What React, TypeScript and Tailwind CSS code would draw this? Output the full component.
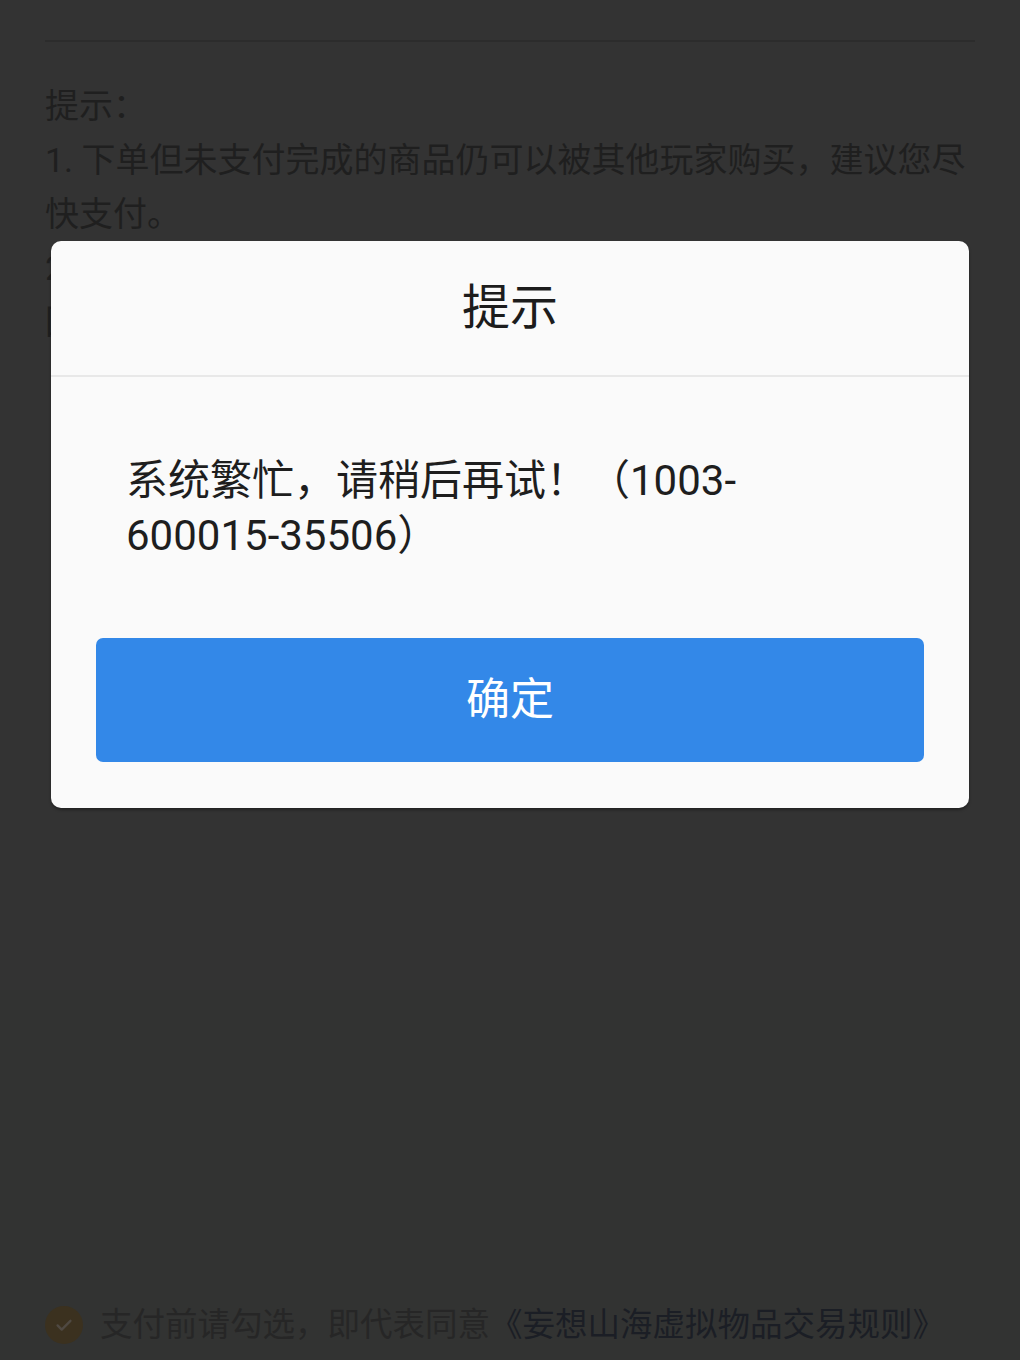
import React from "react";

const font = "font-['Roboto','Noto_Sans_CJK_SC',sans-serif]";

function PageBehind() {
  return (
    <div className="flex h-full flex-col">
      <div className="h-[40px]" />
      <div className="mx-[45px] h-[2px] bg-[#2c2c2c]" />
      <div className="flex flex-1 flex-col">
        <div className="pl-[45px] pr-[45px] pt-[37px] text-[34px] leading-[54px] text-[#1f1f1f]">
          <p>提示：</p>
          <p>1. 下单但未支付完成的商品仍可以被其他玩家购买，建议您尽快支付。</p>
          <p>2. 如商品在支付过程中被其他玩家购买，支付金额将原路退回，请留意账户余额变动。</p>
        </div>
      </div>
      <div className="h-[370px] bg-[#323332] px-[45px] pt-[308px]">
        <div className="flex items-center gap-[17px] text-[32.5px] leading-[54px]">
          <span className="flex h-[38px] w-[38px] shrink-0 items-center justify-center rounded-full bg-[#3b311f]">
            <svg viewBox="0 0 24 24" className="h-[22px] w-[22px]" fill="none" stroke="#4f4942" strokeWidth="2.6" strokeLinecap="round" strokeLinejoin="round">
              <path d="M5 12.5l4.5 4.5L19 7.5" />
            </svg>
          </span>
          <p className="whitespace-nowrap text-[#262626]">
            支付前请勾选，即代表同意<span className="text-[#1b1e25]">《妄想山海虚拟物品交易规则》</span>
          </p>
        </div>
        <p className="text-[32px] leading-[54px] text-[#262626]">并知晓虚拟物品交易的相关风险</p>
      </div>
    </div>
  );
}

function AlertDialog() {
  return (
    <div className="overflow-hidden rounded-[10px] bg-[#fafafa] shadow-[0_2px_3px_rgba(0,0,0,0.35)]">
      <div className="flex h-[136px] items-center justify-center border-b-2 border-[#e8e8e8]">
        <h2 className="text-[48px] text-[#1c1c1c]">提示</h2>
      </div>
      <div className="pl-[75px] pr-[120px] pt-[76px] text-[42px] leading-[55px] text-[#1e1e1e]">
        <p>系统繁忙，请稍后再试！（1003-600015-35506）</p>
      </div>
      <div className="px-[45px] pb-[46px] pt-[75px]">
        <button className="flex h-[124px] w-full items-center justify-center rounded-[7px] bg-[#3388e8] text-[44px] text-white">
          确定
        </button>
      </div>
    </div>
  );
}

export default function App() {
  return (
    <div className={`relative h-[1360px] w-full overflow-hidden bg-[#333333] ${font}`}>
      <PageBehind />
      <div className="absolute inset-0 px-[51px] pt-[241px]">
        <AlertDialog />
      </div>
    </div>
  );
}
